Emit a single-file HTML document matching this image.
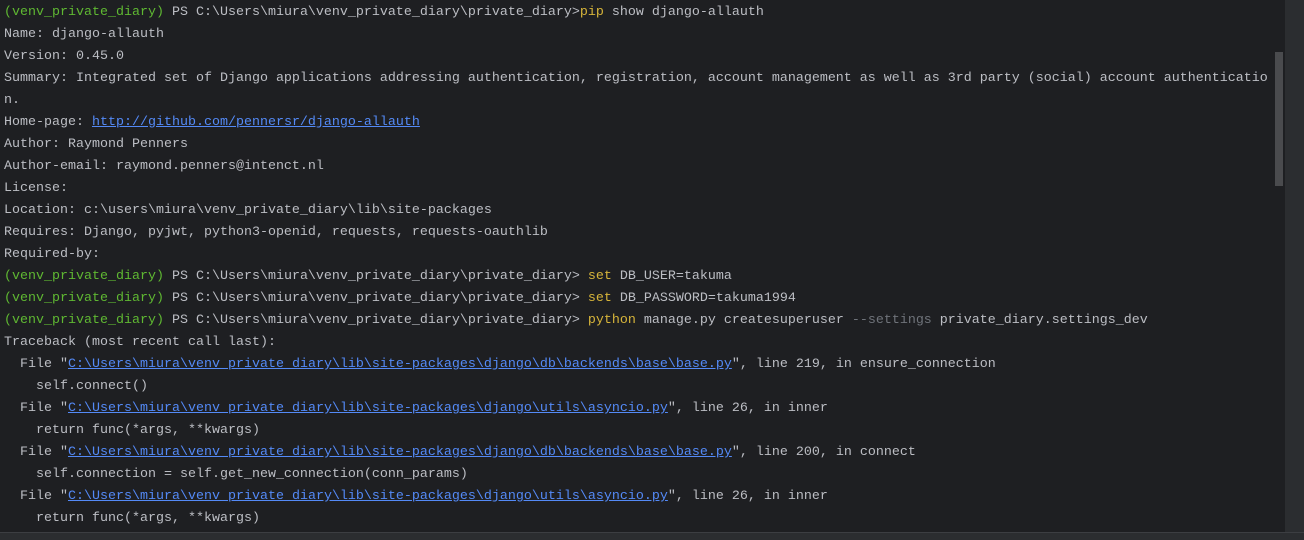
<!DOCTYPE html>
<html><head><meta charset="utf-8"><style>
html,body{margin:0;padding:0;width:1304px;height:539px;overflow:hidden;background:#1e1f22;}
.t{position:absolute;left:4px;top:2px;font-family:"Liberation Mono",monospace;font-size:13.33px;line-height:22px;color:#bcbec4;white-space:pre;}
.g{color:#5fb832}.y{color:#d6b43a}.l{color:#548af7;text-decoration:underline}.d{color:#6f737a}
.side{position:absolute;left:1285px;top:0;width:19px;height:532px;background:#2b2d30}
.sb{position:absolute;left:1275px;top:52px;width:8px;height:134px;background:#4a4b4e}
.bot{position:absolute;left:0;top:532px;width:1304px;height:7px;background:#2b2d30;border-top:1px solid #3c3e42}
</style></head><body>
<div class="t"><span class="g">(venv_private_diary)</span> PS C:\Users\miura\venv_private_diary\private_diary&gt;<span class="y">pip</span> show django-allauth
Name: django-allauth
Version: 0.45.0
Summary: Integrated set of Django applications addressing authentication, registration, account management as well as 3rd party (social) account authenticatio
n.
Home-page: <span class="l">http://github.com/pennersr/django-allauth</span>
Author: Raymond Penners
Author-email: raymond.penners@intenct.nl
License:
Location: c:\users\miura\venv_private_diary\lib\site-packages
Requires: Django, pyjwt, python3-openid, requests, requests-oauthlib
Required-by:
<span class="g">(venv_private_diary)</span> PS C:\Users\miura\venv_private_diary\private_diary&gt; <span class="y">set</span> DB_USER=takuma
<span class="g">(venv_private_diary)</span> PS C:\Users\miura\venv_private_diary\private_diary&gt; <span class="y">set</span> DB_PASSWORD=takuma1994
<span class="g">(venv_private_diary)</span> PS C:\Users\miura\venv_private_diary\private_diary&gt; <span class="y">python</span> manage.py createsuperuser <span class="d">--settings</span> private_diary.settings_dev
Traceback (most recent call last):
  File "<span class="l">C:\Users\miura\venv_private_diary\lib\site-packages\django\db\backends\base\base.py</span>", line 219, in ensure_connection
    self.connect()
  File "<span class="l">C:\Users\miura\venv_private_diary\lib\site-packages\django\utils\asyncio.py</span>", line 26, in inner
    return func(*args, **kwargs)
  File "<span class="l">C:\Users\miura\venv_private_diary\lib\site-packages\django\db\backends\base\base.py</span>", line 200, in connect
    self.connection = self.get_new_connection(conn_params)
  File "<span class="l">C:\Users\miura\venv_private_diary\lib\site-packages\django\utils\asyncio.py</span>", line 26, in inner
    return func(*args, **kwargs)</div>
<div class="side"></div><div class="sb"></div><div class="bot"></div>
</body></html>
